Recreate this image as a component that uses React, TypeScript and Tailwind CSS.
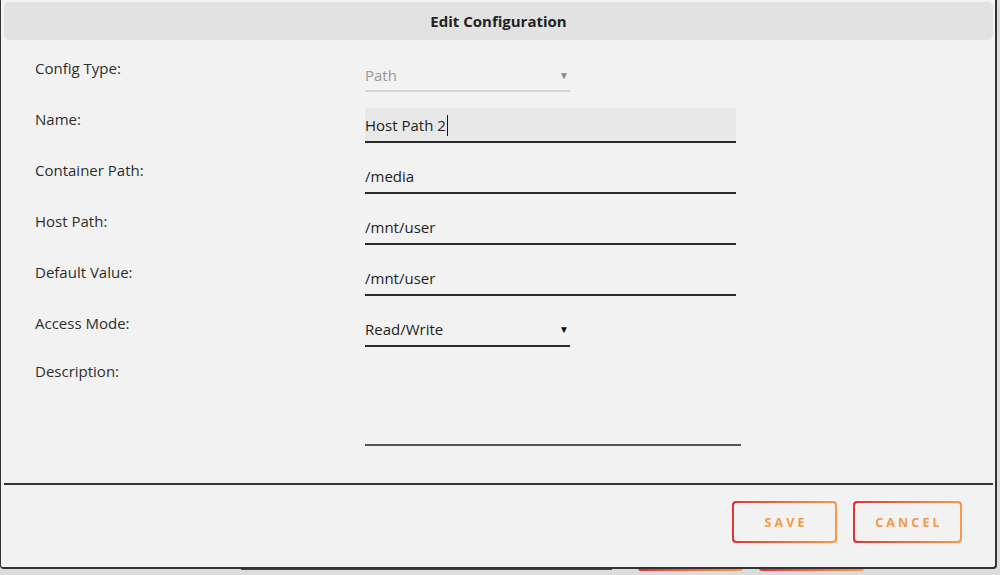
import React from "react";

const font = { fontFamily: '"Open Sans", "Noto Sans", sans-serif' };

function Row({ label, children }: { label: string; children: React.ReactNode }) {
  return (
    <div className="flex h-[35px]">
      <div className="w-[361px] pl-[31px] pt-[1px] text-[15px] leading-[20px] text-[#2e2e2e]">{label}</div>
      {children}
    </div>
  );
}

function TextField({ value }: { value: string }) {
  return (
    <div className="w-[371px] h-[35px] border-b-2 border-[#2b2b2b] flex items-center text-[15px] text-[#1e1e1e] pt-[2px]">
      {value}
    </div>
  );
}

function GradBtn({ label, w }: { label: string; w: string }) {
  return (
    <div className={`${w} h-[42px] rounded-[4px] p-[2px] bg-gradient-to-r from-[#dd3333] to-[#f7994a]`}>
      <div className="w-full h-full rounded-[3px] bg-[#f2f2f2] flex items-center justify-center text-[12.5px] font-bold tracking-[0.25em] text-[#f2994b] pl-[3px] pt-[2px]">
        {label}
      </div>
    </div>
  );
}

export default function App() {
  return (
    <div className="w-[1000px] h-[575px] bg-[#dcdcdc] relative overflow-hidden" style={font}>
      <div className="absolute left-[241px] top-[568px] w-[371px] h-[2px] bg-[#444]" />
      <div className="absolute left-[638px] top-[565px] w-[105px] h-[6px] rounded-b-[3px] bg-gradient-to-r from-[#dd3333] to-[#f7994a]" />
      <div className="absolute left-[759px] top-[565px] w-[105px] h-[6px] rounded-b-[3px] bg-gradient-to-r from-[#dd3333] to-[#f7994a]" />
      <div className="relative w-[997px] h-[569px] bg-[#f2f2f2] border-l border-r-2 border-b-2 border-[#333] rounded-b-[4px] pl-[3px] pr-[2px] pt-[2px] flex flex-col">
        <div className="h-[38px] rounded-[5px] bg-[#e2e2e2] flex items-center justify-center text-[15px] font-bold text-[#222]">
          Edit Configuration
        </div>
        <div className="flex flex-col gap-[16px] mt-[17px]">
          <Row label="Config Type:">
            <div className="w-[205px] h-[35px] border-b-2 border-[#d6d6d6] flex items-center justify-between text-[15px] text-[#999] pt-[3px]">
              <span>Path</span>
              <span className="text-[10px] text-[#888] pr-[1px]">▼</span>
            </div>
          </Row>
          <Row label="Name:">
            <div className="w-[371px] h-[35px] bg-[#e8e8e8] border-b-2 border-[#2b2b2b] flex items-center text-[15px] text-[#1e1e1e] pt-[2px]">
              Host Path 2<span className="inline-block w-[1px] h-[21px] bg-[#111] ml-[1px]" />
            </div>
          </Row>
          <Row label="Container Path:">
            <TextField value="/media" />
          </Row>
          <Row label="Host Path:">
            <TextField value="/mnt/user" />
          </Row>
          <Row label="Default Value:">
            <TextField value="/mnt/user" />
          </Row>
          <Row label="Access Mode:">
            <div className="w-[205px] h-[35px] border-b-2 border-[#2b2b2b] flex items-center justify-between text-[15px] text-[#1e1e1e] pt-[2px]">
              <span>Read/Write</span>
              <span className="text-[10px] text-[#111] pr-[1px]">▼</span>
            </div>
          </Row>
          <div className="flex h-[83px]">
            <div className="w-[361px] pl-[31px] -mt-[2px] text-[15px] leading-[20px] text-[#2e2e2e]">Description:</div>
            <div className="w-[376px] h-[83px] border-b-2 border-[#555]" />
          </div>
        </div>
        <div className="mt-[37px] h-[2px] bg-[#333]" />
        <div className="flex justify-end gap-[16px] pr-[31px] mt-[16px]">
          <GradBtn label="SAVE" w="w-[105px]" />
          <GradBtn label="CANCEL" w="w-[109px]" />
        </div>
      </div>
    </div>
  );
}
